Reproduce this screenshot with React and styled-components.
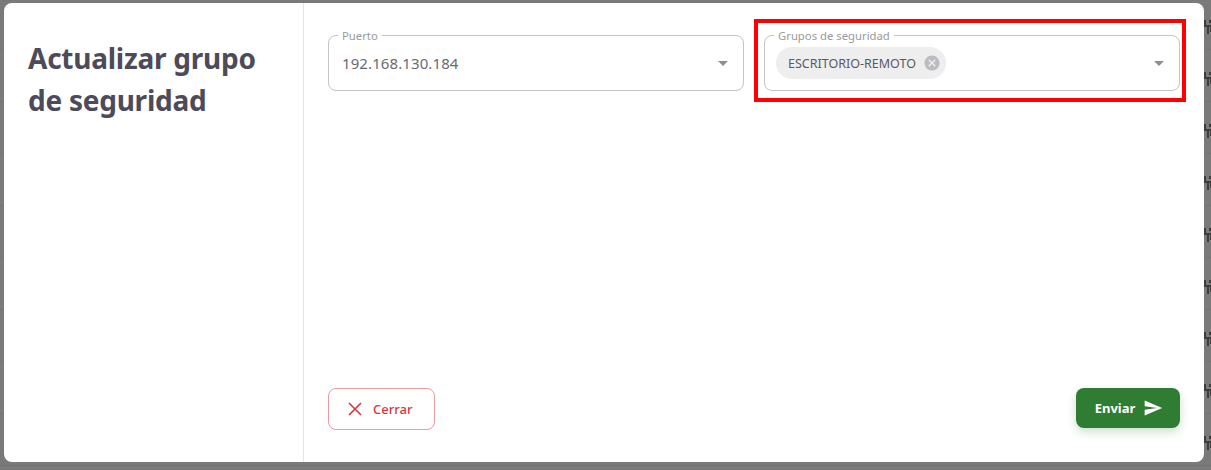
import React from "react";
import styled, { createGlobalStyle } from "styled-components";

const Global = createGlobalStyle`
  html, body { margin: 0; padding: 0; }
  body { font-family: "Noto Sans", "Open Sans", sans-serif; background: #7a7a7a; }
  * { box-sizing: border-box; }
`;

const Backdrop = styled.div`
  position: relative;
  width: 1211px;
  height: 470px;
  overflow: hidden;
  padding: 3px 7px 8px 4px;
  background: repeating-linear-gradient(180deg, #7a7a7a 0 49px, #737373 49px 50px, #7a7a7a 50px 52px);
`;

const RowIcons = styled.div`
  position: absolute;
  left: 1204px;
  top: 18px;
  display: flex;
  flex-direction: column;
  gap: 36px;
`;

const Modal = styled.div`
  position: relative;
  width: 100%;
  height: 100%;
  display: flex;
  background: #fff;
  border-radius: 8px;
`;

const Side = styled.aside`
  width: 300px;
  flex: none;
  border-right: 1px solid #e4e4e6;
  padding: 34px 24px;
`;

const Title = styled.h2`
  margin: 0;
  color: #4d4b5a;
  font-size: 28px;
  font-weight: 700;
  line-height: 42px;
  letter-spacing: -0.25px;
`;

const Content = styled.main`
  flex: 1;
  display: flex;
  flex-direction: column;
  justify-content: space-between;
  padding: 32px 24px 32px;
`;

const Fields = styled.div`
  display: grid;
  grid-template-columns: 1fr 1fr;
  gap: 20px;
`;

const Field = styled.div`
  position: relative;
  height: 56px;
  display: flex;
  align-items: center;
  justify-content: space-between;
  padding: 0 14px 0 13px;
  border: 1px solid #c4c4c8;
  border-radius: 8px;
  ${(p) => p.$marked && `
    padding-left: 11px;
    &::after {
      content: "";
      position: absolute;
      inset: -17px -7px -12px -11px;
      border: 4px solid #fe0000;
      pointer-events: none;
    }
  `}
`;

const Legend = styled.label`
  position: absolute;
  left: 9px;
  top: -8px;
  padding: 0 4px;
  background: #fff;
  color: #9a99a2;
  font-size: 11.3px;
  line-height: 15px;
`;

const Value = styled.span`
  color: #6a6874;
  font-size: 15px;
  letter-spacing: 0.1px;
`;

const Chip = styled.span`
  display: inline-flex;
  align-items: center;
  gap: 7px;
  height: 32px;
  padding: 0 5px 0 12px;
  border-radius: 16px;
  background: #eeeeef;
  color: #5a5866;
  font-size: 12.5px;
`;

const ChipClose = styled.svg`
  width: 18px;
  height: 18px;
  fill: #bcbcc0;
  flex: none;
`;

const Arrow = styled.svg`
  width: 24px;
  height: 24px;
  margin-right: -6px;
  fill: #8f8e97;
  flex: none;
`;

const Footer = styled.div`
  display: flex;
  align-items: flex-start;
  justify-content: space-between;
`;

const CloseButton = styled.button`
  display: flex;
  align-items: center;
  gap: 10px;
  width: 107px;
  height: 42px;
  padding: 0 0 0 18px;
  border: 1px solid #ee9a9e;
  border-radius: 8px;
  background: #fff;
  color: #d8343b;
  font: 500 13px "Noto Sans", sans-serif;
`;

const SendButton = styled.button`
  display: flex;
  align-items: center;
  justify-content: center;
  gap: 8px;
  width: 104px;
  height: 40px;
  padding: 0 0 0 2px;
  border: 0;
  border-radius: 8px;
  background: #2e7d32;
  color: #fff;
  font: 700 13px "Noto Sans", sans-serif;
  box-shadow: 0 4px 10px rgba(46, 125, 50, 0.24);
`;

const RowGlyph = () => (
  <svg width="8" height="16" viewBox="0 0 8 16" fill="none" stroke="#3d3d3d" strokeWidth="2">
    <path d="M1 2v6h7M4 8v8M6 2v3M7 8v6" />
  </svg>
);

export default function App() {
  return (
    <>
      <Global />
      <Backdrop>
        <RowIcons>
          {Array.from({ length: 9 }, (_, i) => <RowGlyph key={i} />)}
        </RowIcons>
        <Modal>
          <Side>
            <Title>Actualizar grupo de seguridad</Title>
          </Side>
          <Content>
            <Fields>
              <Field>
                <Legend>Puerto</Legend>
                <Value>192.168.130.184</Value>
                <Arrow viewBox="0 0 24 24"><path d="M7 10l5 5 5-5z" /></Arrow>
              </Field>
              <Field $marked>
                <Legend>Grupos de seguridad</Legend>
                <Chip>
                  ESCRITORIO-REMOTO
                  <ChipClose viewBox="0 0 24 24">
                    <path d="M12 2C6.47 2 2 6.47 2 12s4.47 10 10 10 10-4.47 10-10S17.53 2 12 2zm5 13.59L15.59 17 12 13.41 8.41 17 7 15.59 10.59 12 7 8.41 8.41 7 12 10.59 15.59 7 17 8.41 13.41 12 17 15.59z" />
                  </ChipClose>
                </Chip>
                <Arrow viewBox="0 0 24 24"><path d="M7 10l5 5 5-5z" /></Arrow>
              </Field>
            </Fields>
            <Footer>
              <CloseButton>
                <svg width="16" height="16" viewBox="0 0 16 16" stroke="#d8343b" strokeWidth="1.6" fill="none"><path d="M2 2l12 12M14 2L2 14" /></svg>
                Cerrar
              </CloseButton>
              <SendButton>
                Enviar
                <svg width="20" height="20" viewBox="0 0 24 24" fill="#fff"><path d="M2.01 21L23 12 2.01 3 2 10l15 2-15 2z" /></svg>
              </SendButton>
            </Footer>
          </Content>
        </Modal>
      </Backdrop>
    </>
  );
}
